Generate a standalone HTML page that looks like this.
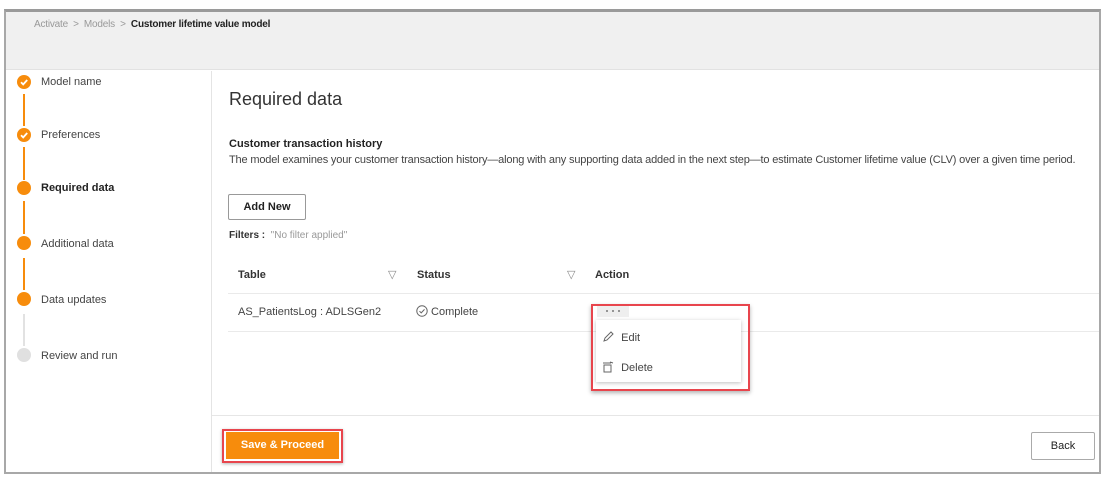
<!DOCTYPE html>
<html><head><style>
*{margin:0;padding:0;box-sizing:border-box}
body{width:1107px;height:481px;background:#fff;font-family:"Liberation Sans",sans-serif;color:#333;position:relative;overflow:hidden;font-size:11px}
.a{position:absolute;white-space:nowrap}
.frame{position:absolute;left:4px;top:9px;width:1097px;height:465px;border:2px solid #a8a8a8;border-top:3px solid #9a9a9a}
.hdr{position:absolute;left:6px;top:12px;width:1093px;height:58px;background:#f0f0f0;border-bottom:1px solid #e2e2e2}
.side{position:absolute;left:6px;top:71px;width:206px;height:401px;border-right:1px solid #e4e4e4}
.dot{position:absolute;left:17px;width:14px;height:14px;border-radius:50%;background:#f78c0c}
.line{position:absolute;left:23px;width:2px;background:#f78c0c}
.lbl{position:absolute;left:41px;font-size:11px;color:#444}
</style></head><body>
<div class="hdr"></div>
<div class="frame"></div>
<div class="a" style="left:34px;top:19px;color:#999;font-size:10px;letter-spacing:-0.2px">Activate &nbsp;&gt;&nbsp; Models &nbsp;&gt;&nbsp; <b style="color:#222">Customer lifetime value model</b></div>
<div class="side"></div>
<div class="line" style="top:94px;height:32px"></div>
<div class="line" style="top:147px;height:33px"></div>
<div class="line" style="top:201px;height:33px"></div>
<div class="line" style="top:258px;height:32px"></div>
<div class="line" style="top:314px;height:32px;background:#e2e2e2"></div>
<div class="dot" style="top:75px"><svg width="14" height="14"><path d="M4 7.2l2.2 2.2 4-4.4" stroke="#fff" stroke-width="1.8" fill="none"/></svg></div>
<div class="dot" style="top:128px"><svg width="14" height="14"><path d="M4 7.2l2.2 2.2 4-4.4" stroke="#fff" stroke-width="1.8" fill="none"/></svg></div>
<div class="dot" style="top:181px"></div>
<div class="dot" style="top:236px"></div>
<div class="dot" style="top:292px"></div>
<div class="dot" style="top:348px;background:#e0e0e0"></div>
<div class="lbl" style="top:76px">Model name</div>
<div class="lbl" style="top:129px">Preferences</div>
<div class="lbl" style="top:182px;font-weight:bold;color:#222">Required data</div>
<div class="lbl" style="top:238px">Additional data</div>
<div class="lbl" style="top:294px">Data updates</div>
<div class="lbl" style="top:350px">Review and run</div>

<div class="a" style="left:229px;top:89px;font-size:18px;color:#333">Required data</div>
<div class="a" style="left:229px;top:138px;font-weight:bold;font-size:11px;color:#222">Customer transaction history</div>
<div class="a" style="left:229px;top:154px;font-size:11px;color:#444;letter-spacing:-0.17px">The model examines your customer transaction history—along with any supporting data added in the next step—to estimate Customer lifetime value (CLV) over a given time period.</div>
<div class="a" style="left:228px;top:194px;width:78px;height:26px;border:1px solid #999;border-radius:2px;font-weight:bold;text-align:center;line-height:24px;color:#222">Add New</div>
<div class="a" style="left:229px;top:230px;font-size:10px"><b style="color:#333">Filters :</b> <span style="color:#999">&nbsp;"No filter applied"</span></div>

<div class="a" style="left:238px;top:269px;font-weight:bold;color:#333">Table</div>
<div class="a" style="left:388px;top:268px;color:#888">&#x25BD;</div>
<div class="a" style="left:417px;top:269px;font-weight:bold;color:#333">Status</div>
<div class="a" style="left:567px;top:268px;color:#888">&#x25BD;</div>
<div class="a" style="left:595px;top:269px;font-weight:bold;color:#333">Action</div>
<div class="a" style="left:228px;top:293px;width:871px;height:1px;background:#eaeaea"></div>
<div class="a" style="left:228px;top:331px;width:871px;height:1px;background:#eaeaea"></div>
<div class="a" style="left:238px;top:306px;color:#444">AS_PatientsLog : ADLSGen2</div>
<div class="a" style="left:416px;top:305px;color:#444"><svg width="12" height="12" style="vertical-align:-2px"><circle cx="6" cy="6" r="5.2" stroke="#666" fill="none"/><path d="M3.5 6.2l1.7 1.7 3.3-3.5" stroke="#666" fill="none"/></svg> Complete</div>

<div class="a" style="left:591px;top:304px;width:159px;height:87px;border:2px solid #e8454d;box-shadow:0 2px 4px rgba(0,0,0,.3)"></div>
<div class="a" style="left:597px;top:306px;width:32px;height:11px;background:#eee"><svg width="32" height="11"><circle cx="10" cy="5" r="0.9" fill="#555"/><circle cx="16" cy="5" r="0.9" fill="#555"/><circle cx="22" cy="5" r="0.9" fill="#555"/></svg></div>
<div class="a" style="left:596px;top:320px;width:145px;height:62px;background:#fff;box-shadow:0 1px 4px rgba(0,0,0,.25)"></div>
<div class="a" style="left:602px;top:330px;color:#444"><svg width="13" height="13" style="vertical-align:-2px"><path d="M2 11l1-3 6-6 2 2-6 6z" stroke="#666" fill="none"/></svg> &nbsp;Edit</div>
<div class="a" style="left:602px;top:360px;color:#444"><svg width="13" height="13" style="vertical-align:-2px"><rect x="2" y="5" width="7" height="7" stroke="#666" fill="none"/><path d="M1 3h8M8 2l3 1" stroke="#666" fill="none"/></svg> &nbsp;Delete</div>

<div class="a" style="left:212px;top:415px;width:887px;height:1px;background:#e6e6e6"></div>
<div class="a" style="left:222px;top:429px;width:121px;height:34px;border:2px solid #e8454d;box-shadow:0 1px 3px rgba(0,0,0,.3)"></div>
<div class="a" style="left:226px;top:432px;width:113px;height:27px;background:#f78c0c;color:#fff;font-weight:bold;text-align:center;line-height:27px">Save &amp; Proceed</div>
<div class="a" style="left:1031px;top:432px;width:64px;height:28px;border:1px solid #aaa;border-radius:2px;text-align:center;line-height:26px;color:#222">Back</div>
</body></html>
